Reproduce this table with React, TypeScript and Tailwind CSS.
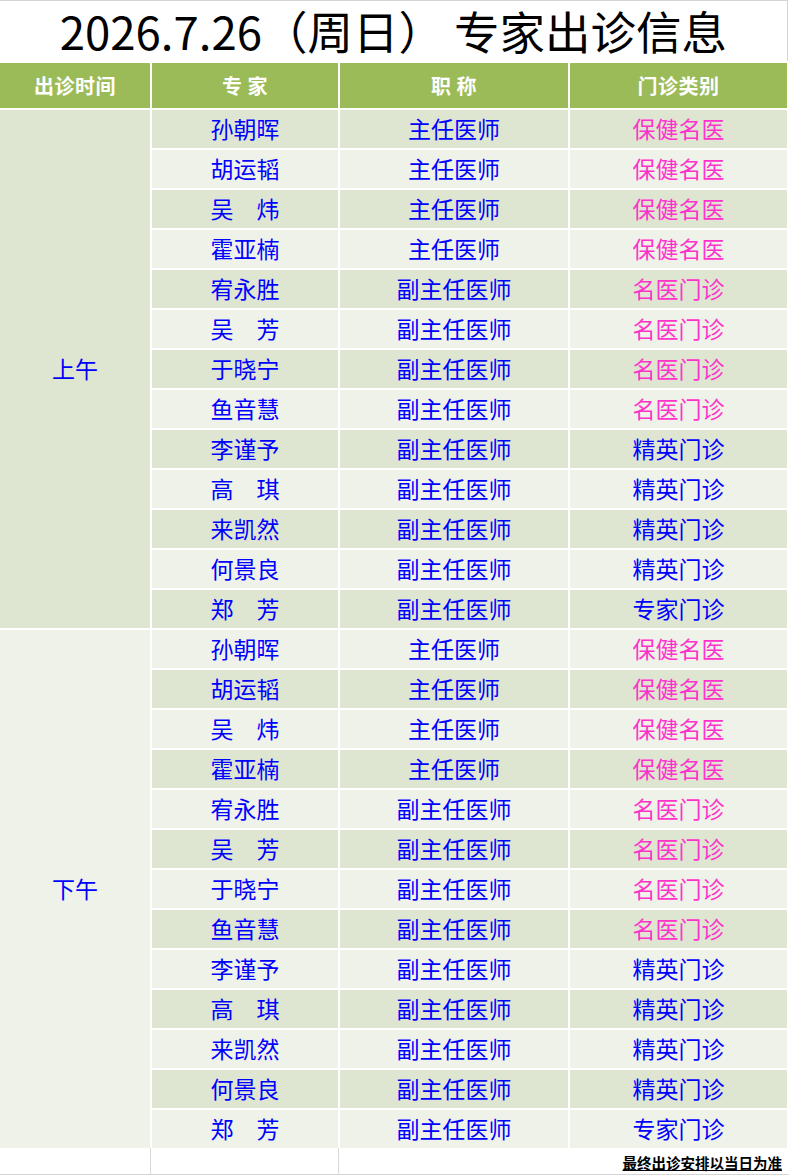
import React from 'react';

const doctors = [
  { name: '孙朝晖', title: '主任医师', type: '保健名医', pink: true },
  { name: '胡运韬', title: '主任医师', type: '保健名医', pink: true },
  { name: '吴　炜', title: '主任医师', type: '保健名医', pink: true },
  { name: '霍亚楠', title: '主任医师', type: '保健名医', pink: true },
  { name: '宥永胜', title: '副主任医师', type: '名医门诊', pink: true },
  { name: '吴　芳', title: '副主任医师', type: '名医门诊', pink: true },
  { name: '于晓宁', title: '副主任医师', type: '名医门诊', pink: true },
  { name: '鱼音慧', title: '副主任医师', type: '名医门诊', pink: true },
  { name: '李谨予', title: '副主任医师', type: '精英门诊', pink: false },
  { name: '高　琪', title: '副主任医师', type: '精英门诊', pink: false },
  { name: '来凯然', title: '副主任医师', type: '精英门诊', pink: false },
  { name: '何景良', title: '副主任医师', type: '精英门诊', pink: false },
  { name: '郑　芳', title: '副主任医师', type: '专家门诊', pink: false },
];

const sessions = ['上午', '下午'];

export default function App() {
  return (
    <div className="w-[789px] h-[1175px] bg-white font-['Noto_Sans_CJK_SC','Noto_Sans',sans-serif] overflow-hidden">
      {/* 标题 */}
      <div className="w-[788px] h-[61px] border-t border-r border-[#d4d4d4] text-center text-[45.5px] leading-[58px] text-black whitespace-nowrap">
        2026.7.26（周日） 专家出诊信息
      </div>

      <div className="mt-[2px] grid grid-cols-[150px_186px_228px_217px] gap-[2px] bg-white">
        {['出诊时间', '专 家', '职 称', '门诊类别'].map((h) => (
          <div key={h} className="h-[45px] bg-[#9bbb59] flex items-center justify-center text-white font-bold text-[20px] tracking-[0.5px]">
            {h}
          </div>
        ))}

        {sessions.map((s, si) => (
          <React.Fragment key={s}>
            <div
              className={`flex items-center justify-center text-[23px] text-[#0000ff] pb-[2px] ${
                si === 0 ? 'bg-[#dee6d1]' : 'bg-[#eff2e9]'
              }`}
              style={{ gridColumn: 1, gridRow: `${2 + si * 13} / span 13` }}
            >
              {s}
            </div>
            {doctors.map((d, i) => {
              const idx = si * 13 + i;
              const bg = idx % 2 === 0 ? 'bg-[#dee6d1]' : 'bg-[#eff2e9]';
              return (
                <React.Fragment key={s + d.name}>
                  <div className={`h-[38px] ${bg} flex items-center justify-center text-[23px] text-[#0000ff] pb-[2px] whitespace-pre`}>
                    {d.name}
                  </div>
                  <div className={`h-[38px] ${bg} flex items-center justify-center text-[23px] text-[#0000ff] pb-[2px]`}>
                    {d.title}
                  </div>
                  <div
                    className={`h-[38px] ${bg} flex items-center justify-center text-[23px] pb-[2px] ${
                      d.pink ? 'text-[#ff33cc]' : 'text-[#0000ff]'
                    }`}
                  >
                    {d.type}
                  </div>
                </React.Fragment>
              );
            })}
          </React.Fragment>
        ))}
      </div>

      {/* 底部说明 */}
      <div className="h-[27px] border-b border-[#d4d4d4] flex">
        <div className="w-[151px] border-r border-[#d9d9d9]" />
        <div className="w-[188px] border-r border-[#d9d9d9]" />
        <div className="flex-1 flex items-end justify-end pr-[7px] pb-[4px]">
          <span className="text-[14.5px] font-bold text-black underline leading-none">最终出诊安排以当日为准</span>
        </div>
      </div>
    </div>
  );
}
